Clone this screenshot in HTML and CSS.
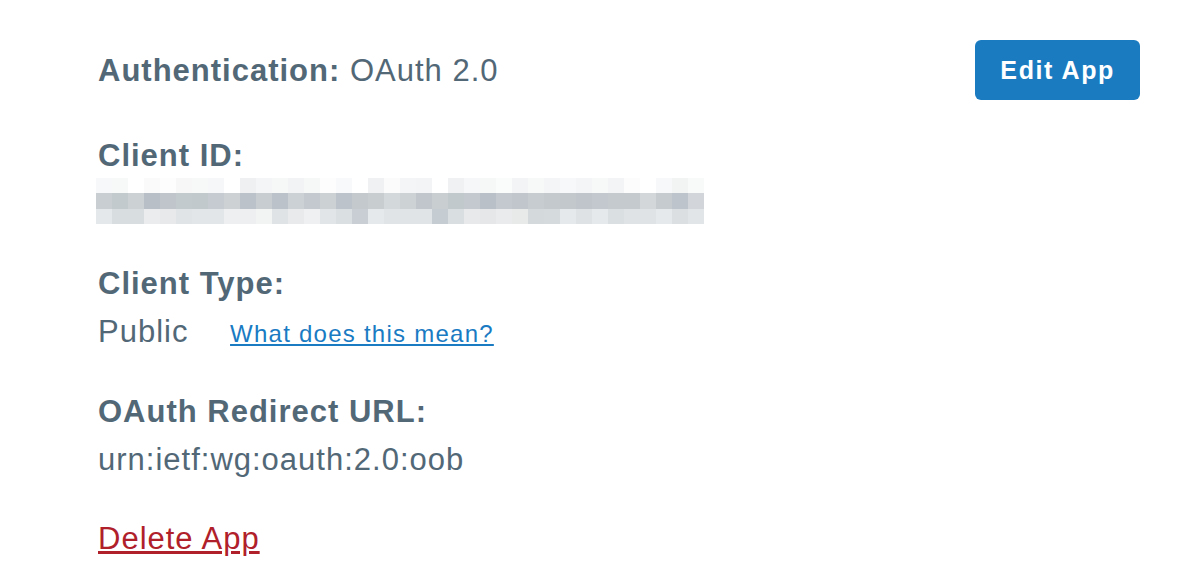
FILE: index.html
```html
<!DOCTYPE html>
<html lang="en">
<head>
<meta charset="utf-8">
<title>App details</title>
<link rel="stylesheet" href="styles.css">
</head>
<body>
<main class="page">
  <header class="head">
    <div class="line head-text"><span class="label">Authentication:</span> OAuth 2.0</div>
    <button class="btn" type="button">Edit App</button>
  </header>

  <section class="field">
    <div class="label line">Client ID:</div>
    <div class="value blurred">
      <div class="pixels" id="pixels"></div>
    </div>
  </section>

  <section class="field">
    <div class="label line">Client Type:</div>
    <div class="value">Public <a class="help" href="#">What does this mean?</a></div>
  </section>

  <section class="field">
    <div class="label line">OAuth Redirect URL:</div>
    <div class="value">urn:ietf:wg:oauth:2.0:oob</div>
  </section>

  <a class="danger line" href="#">Delete App</a>
</main>
<script src="app.js"></script>
</body>
</html>
```

FILE: styles.css
```css
html, body {
  margin: 0;
  padding: 0;
  background: #ffffff;
}

body {
  font-family: "Liberation Sans", Arial, Helvetica, sans-serif;
  color: #526877;
  font-size: 31px;
  letter-spacing: 1px;
}

.page {
  padding: 40px 60px 0 98px;
  display: flex;
  flex-direction: column;
  align-items: flex-start;
}

.head {
  align-self: stretch;
  height: 60px;
  display: flex;
  align-items: center;
  justify-content: space-between;
  margin-bottom: 36px;
}

.line {
  line-height: 40px;
}

.head-text {
  padding-top: 2px;
}

.label {
  font-weight: bold;
}

.btn {
  height: 60px;
  padding: 0 25px;
  border: none;
  border-radius: 6px;
  background: #1a7bc1;
  color: #ffffff;
  font-family: inherit;
  font-weight: bold;
  font-size: 25px;
  letter-spacing: 1.6px;
  line-height: 60px;
  cursor: pointer;
}

.field {
  display: flex;
  flex-direction: column;
  margin-bottom: 32px;
}

.value {
  line-height: 56px;
  height: 56px;
  white-space: nowrap;
}

.blurred {
  padding-top: 1.5px;
  box-sizing: border-box;
}

.pixels {
  margin-left: -2px;
  display: grid;
  grid-template-columns: repeat(38, 16px);
  grid-auto-rows: 15.5px;
}

.help {
  margin-left: 32px;
  font-size: 24px;
  letter-spacing: 1.25px;
  color: #1a7bc3;
  text-decoration: underline;
}

.danger {
  margin-top: -1px;
  color: #b0202a;
  text-decoration: underline;
}
```

FILE: app.js
```js
(function () {
  var rows = [
    "f7f8f9 f7f9f8 ffffff fafafa fdfdfd f7f7f7 f7f8f8 f6f7f8 ffffff eff0f2 f4f5f6 f6f7f7 f2f3f4 f6f8f7 fdfdfd f8f9fa ffffff f0f1f2 fafbfa f4f5f6 f3f4f5 ffffff f0f1f2 f6f7f8 f6f7f7 fafcfb f3f4f5 f7f8f8 f4f5f6 f7f8f9 f4f5f6 f7f8f8 f3f4f5 fbfcfb ffffff f7f8f9 f2f3f3 f8f9f9",
    "c9ced2 c3cacd ccd1d4 b8bfc6 bfc5cb c3cacd c2c9cc c6cbd1 cdd1d4 bcc2c9 c8cdd1 bcc2c9 ccd1d5 c3c9ce ccd1d4 bcc3ca c4c9cd c8cdd0 d3d8da cdd2d4 c0c6cc c9ced1 c2c9cc c3c9ce b9c0c7 c3c9ce c0c6cc c6cccf c3c9cc c2c8cb bfc5ca c2c8cd c4cacd c4cacd d3d7da c5cbcf bec4cb d2d6db",
    "e5e8eb d8dee0 d8dee0 ebecee e7e9ea e0e4e7 e3e6e9 e3e6e9 eeeff0 eeeff1 f2f3f3 dfe3e6 e8eaec eff0f1 e1e5e8 dadfe2 c8ced4 e6e9ec e0e4e6 e0e4e6 e0e4e6 c6cdd2 d9dee1 e8e9ea e5e7e9 eaebec e8eaea d4d9dc d5dadd e6e9eb dee2e5 e6e9eb dadfe2 e0e3e6 e0e3e6 e6e9eb dbdfe2 e2e5e8"
  ];
  var host = document.getElementById("pixels");
  rows.forEach(function (row) {
    row.split(" ").forEach(function (c) {
      var cell = document.createElement("span");
      cell.style.background = "#" + c;
      host.appendChild(cell);
    });
  });
})();
```
